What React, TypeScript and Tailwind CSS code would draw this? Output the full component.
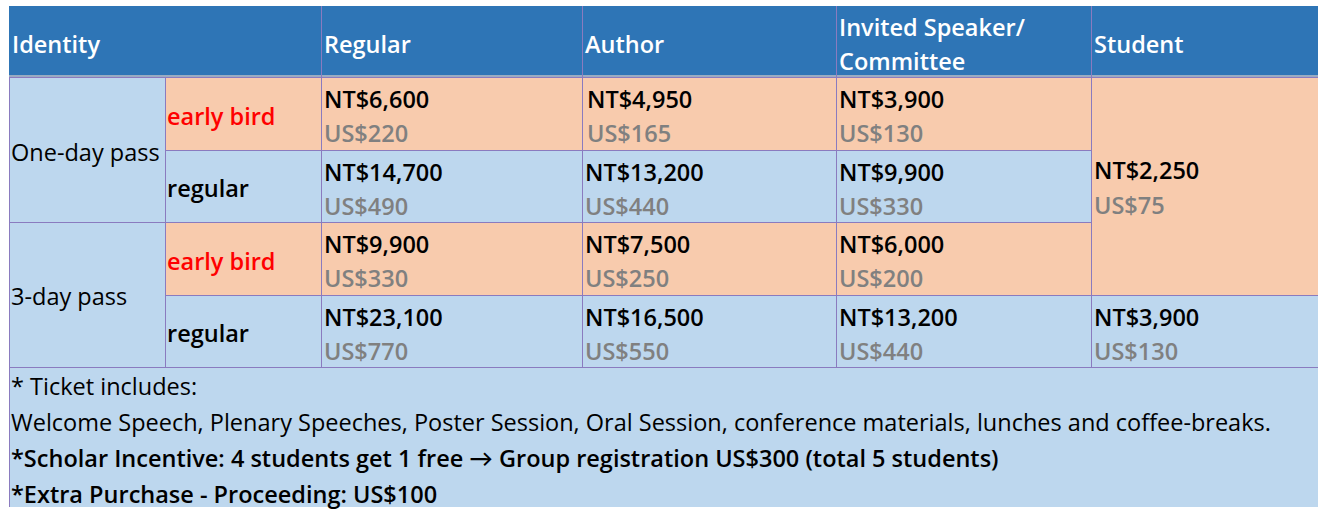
import React from 'react';

const font = { fontFamily: '"Open Sans", Lato, sans-serif' };

interface Price {
  nt: string;
  us: string;
}

function PriceCell({ price, tone, className = '' }: { price: Price; tone: 'peach' | 'blue'; className?: string }) {
  return (
    <div
      className={`pl-[2px] pt-[4px] font-semibold text-[23.5px] leading-[34px] ${
        tone === 'peach' ? 'bg-[#f8cbad]' : 'bg-[#bdd7ee]'
      } ${className}`}
    >
      <div className="text-black">{price.nt}</div>
      <div className="text-[#808080]">{price.us}</div>
    </div>
  );
}

function HeaderCell({ children, className = '' }: { children: React.ReactNode; className?: string }) {
  return (
    <div
      className={`flex items-center pt-[6px] pl-[2px] bg-[#2e75b6] border-b-[2px] border-[#9aabc2] text-white font-semibold text-[23.5px] leading-[34px] ${className}`}
    >
      <div>{children}</div>
    </div>
  );
}

function Label({ text, early, className = '' }: { text: string; early?: boolean; className?: string }) {
  return (
    <div
      className={`flex items-center pt-[5px] pl-[1px] font-semibold text-[23.5px] ${
        early ? 'bg-[#f8cbad] text-[#ff0000]' : 'bg-[#bdd7ee] text-black'
      } ${className}`}
    >
      {text}
    </div>
  );
}

export default function App() {
  return (
    <div className="bg-white w-[1326px] h-[521px] pt-[6px] pl-[9px]" style={font}>
      <div className="grid w-[1309px] gap-px bg-[#8a7bbf] pl-px grid-cols-[155px_155px_260px_253px_254px_226px] grid-rows-[71px_72px_71px_72px_71px_139px]">
        <HeaderCell className="col-span-2 -ml-px pl-[3px]">Identity</HeaderCell>
        <HeaderCell>Regular</HeaderCell>
        <HeaderCell>Author</HeaderCell>
        <HeaderCell>
          Invited Speaker/
          <br />
          Committee
        </HeaderCell>
        <HeaderCell>Student</HeaderCell>

        <div className="row-span-2 flex items-center pt-[6px] pl-[1px] bg-[#bdd7ee] text-[23.5px] text-black">
          One-day pass
        </div>
        <Label text="early bird" early />
        <PriceCell tone="peach" price={{ nt: 'NT$6,600', us: 'US$220' }} />
        <PriceCell tone="peach" className="pl-[4px]" price={{ nt: 'NT$4,950', us: 'US$165' }} />
        <PriceCell tone="peach" price={{ nt: 'NT$3,900', us: 'US$130' }} />
        <div className="row-span-3 flex flex-col justify-center pl-[2px] pt-[2px] bg-[#f8cbad] font-semibold text-[23.5px] leading-[35px]">
          <div className="text-black">NT$2,250</div>
          <div className="text-[#808080]">US$75</div>
        </div>

        <Label text="regular" />
        <PriceCell tone="blue" price={{ nt: 'NT$14,700', us: 'US$490' }} />
        <PriceCell tone="blue" price={{ nt: 'NT$13,200', us: 'US$440' }} />
        <PriceCell tone="blue" price={{ nt: 'NT$9,900', us: 'US$330' }} />

        <div className="row-span-2 flex items-center pt-[4px] pl-[1px] bg-[#bdd7ee] text-[23.5px] text-black">
          3-day pass
        </div>
        <Label text="early bird" early />
        <PriceCell tone="peach" price={{ nt: 'NT$9,900', us: 'US$330' }} />
        <PriceCell tone="peach" price={{ nt: 'NT$7,500', us: 'US$250' }} />
        <PriceCell tone="peach" price={{ nt: 'NT$6,000', us: 'US$200' }} />

        <Label text="regular" />
        <PriceCell tone="blue" price={{ nt: 'NT$23,100', us: 'US$770' }} />
        <PriceCell tone="blue" price={{ nt: 'NT$16,500', us: 'US$550' }} />
        <PriceCell tone="blue" price={{ nt: 'NT$13,200', us: 'US$440' }} />
        <PriceCell tone="blue" price={{ nt: 'NT$3,900', us: 'US$130' }} />

        <div className="col-span-6 bg-[#bdd7ee] pl-[1px] text-[23.5px] leading-[36px] text-black">
          <div>* Ticket includes:</div>
          <div>
            Welcome Speech, Plenary Speeches, Poster Session, Oral Session, conference materials, lunches and
            coffee-breaks.
          </div>
          <div className="font-semibold">
            *Scholar Incentive: 4 students get 1 free → Group registration US$300 (total 5 students)
          </div>
          <div className="font-semibold">*Extra Purchase - Proceeding: US$100</div>
        </div>
      </div>
    </div>
  );
}
